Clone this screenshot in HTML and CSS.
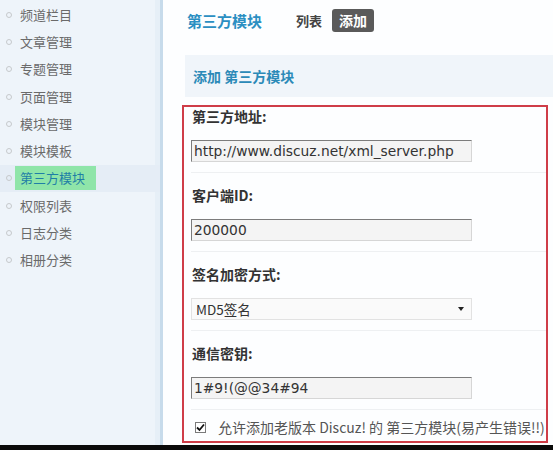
FILE: index.html
```html
<!DOCTYPE html>
<html lang="zh-CN">
<head>
<meta charset="utf-8">
<title>第三方模块</title>
<link rel="stylesheet" href="styles.css">
</head>
<body>
<div class="page">
  <div class="layout">
    <ul class="side">
      <li class="side-item"><span class="dot"></span><span class="side-text">频道栏目</span></li>
      <li class="side-item"><span class="dot"></span><span class="side-text">文章管理</span></li>
      <li class="side-item"><span class="dot"></span><span class="side-text">专题管理</span></li>
      <li class="side-item"><span class="dot"></span><span class="side-text">页面管理</span></li>
      <li class="side-item"><span class="dot"></span><span class="side-text">模块管理</span></li>
      <li class="side-item"><span class="dot"></span><span class="side-text">模块模板</span></li>
      <li class="side-item active"><span class="dot"></span><span class="side-text">第三方模块</span></li>
      <li class="side-item"><span class="dot"></span><span class="side-text">权限列表</span></li>
      <li class="side-item"><span class="dot"></span><span class="side-text">日志分类</span></li>
      <li class="side-item"><span class="dot"></span><span class="side-text">相册分类</span></li>
    </ul>
    <div class="main">
      <div class="titlebar">
        <span class="title">第三方模块</span>
        <span class="tab">列表</span>
        <span class="tab current">添加</span>
      </div>
      <div class="panel-head">添加 第三方模块</div>
      <div class="form">
        <div class="field first">
          <div class="label">第三方地址:</div>
          <div class="input">http://www.discuz.net/xml_server.php</div>
        </div>
        <div class="field">
          <div class="label">客户端ID:</div>
          <div class="input">200000</div>
        </div>
        <div class="field">
          <div class="label">签名加密方式:</div>
          <div class="select"><span class="select-text">MD5签名</span><span class="arrow"></span></div>
        </div>
        <div class="field">
          <div class="label">通信密钥:</div>
          <div class="input">1#9!(@@34#94</div>
        </div>
        <div class="check-row">
          <span class="checkbox"><svg width="9" height="9" viewBox="0 0 9 9"><path d="M1 4.5 L3.5 7 L8 1.5" fill="none" stroke="#111" stroke-width="1.8"/></svg></span>
          <span class="check-text">允许添加老版本 Discuz! 的 第三方模块(易产生错误!!)</span>
        </div>
      </div>
    </div>
  </div>
  <div class="strip"></div>
</div>
</body>
</html>
```
FILE: styles.css
```css
* { box-sizing: border-box; }
html, body { margin: 0; padding: 0; }
body {
  width: 553px;
  height: 450px;
  overflow: hidden;
  font-family: "Noto Sans CJK SC", "DejaVu Sans", sans-serif;
  background: #fff;
}
.page { display: flex; flex-direction: column; height: 450px; }
.layout { display: flex; height: 445px; overflow: hidden; }
.strip { height: 5px; background: #0a0a0a; }

.side {
  list-style: none;
  margin: 0;
  padding: 1px 0 0 0;
  width: 163px;
  flex: none;
  background: #eef4fa;
  border-right: 3px solid #c7dbeb;
  box-shadow: inset -5px 0 0 #e6eff7;
}
.side-item {
  height: 27.3px;
  display: flex;
  align-items: center;
  font-size: 13px;
  color: #6a6a6a;
}
.dot {
  width: 6px;
  height: 6px;
  border: 1px solid #c6c9cc;
  border-radius: 50%;
  margin-left: 6px;
  margin-right: 8px;
  flex: none;
}
.side-text { line-height: 24px; }
.side-item.active { background: #e5edf6; }
.side-item.active .side-text {
  background: #8fe5a9;
  color: #1f7fa6;
  padding: 0 5px;
  margin-left: -5px;
  width: 81px;
}

.main {
  flex: 1;
  padding-left: 22px;
  background: #fdfeff;
  min-width: 0;
}
.titlebar {
  height: 55px;
  display: flex;
  align-items: flex-start;
  padding-top: 9px;
  padding-left: 2px;
}
.title {
  font-size: 15px;
  font-weight: bold;
  color: #2b8fc2;
  line-height: 23px;
  margin-right: 34px;
}
.tab {
  font-size: 13px;
  font-weight: bold;
  color: #444;
  line-height: 23px;
  margin-right: 10px;
}
.tab.current {
  background: #5a5a5a;
  color: #fff;
  padding: 0 7px;
  border-radius: 3px;
  font-size: 14px;
}
.panel-head {
  height: 42px;
  line-height: 42px;
  background: #f0f5fa;
  padding-left: 8px;
  font-size: 14px;
  font-weight: bold;
  color: #2b8ab8;
  width: 400px;
}
.form {
  margin-top: 8px;
  margin-left: -3px;
  width: 366px;
  height: 338px;
  border: 2px solid #cf3d48;
  padding: 0 0 0 7px;
}
.field {
  padding-top: 14px;
  padding-bottom: 10px;
  border-bottom: 1px solid #eef0f2;
}
.field.first { padding-top: 1px; }
.label {
  font-size: 14px;
  font-weight: bold;
  color: #333;
  line-height: 16px;
  height: 16px;
  padding-left: 1px;
  margin-bottom: 16px;
}
.input {
  width: 281px;
  height: 22px;
  line-height: 20px;
  border: 1px solid;
  border-color: #7c7c7c #d6d6d6 #d6d6d6 #7c7c7c;
  background: #f4f4f4;
  font-family: "DejaVu Sans", sans-serif;
  font-size: 13.8px;
  color: #333;
  padding-left: 2px;
  white-space: nowrap;
  overflow: hidden;
}
.select {
  width: 281px;
  height: 22px;
  border: 1px solid #e2e2e2;
  background: #fafafa;
  display: flex;
  align-items: center;
  justify-content: space-between;
  padding: 0 7px 0 4px;
}
.select-text {
  font-size: 13.5px;
  color: #333;
  line-height: 20px;
}
.arrow {
  width: 0;
  height: 0;
  border-left: 3px solid transparent;
  border-right: 3px solid transparent;
  border-top: 4px solid #222;
}
.check-row {
  display: flex;
  align-items: center;
  height: 34px;
  padding-left: 4px;
}
.checkbox {
  width: 11px;
  height: 11px;
  border: 1px solid #7a7a7a;
  background: #fff;
  display: flex;
  align-items: center;
  justify-content: center;
  margin-right: 12px;
  flex: none;
}
.check-text {
  font-size: 14px;
  color: #555;
  white-space: nowrap;
}
```
